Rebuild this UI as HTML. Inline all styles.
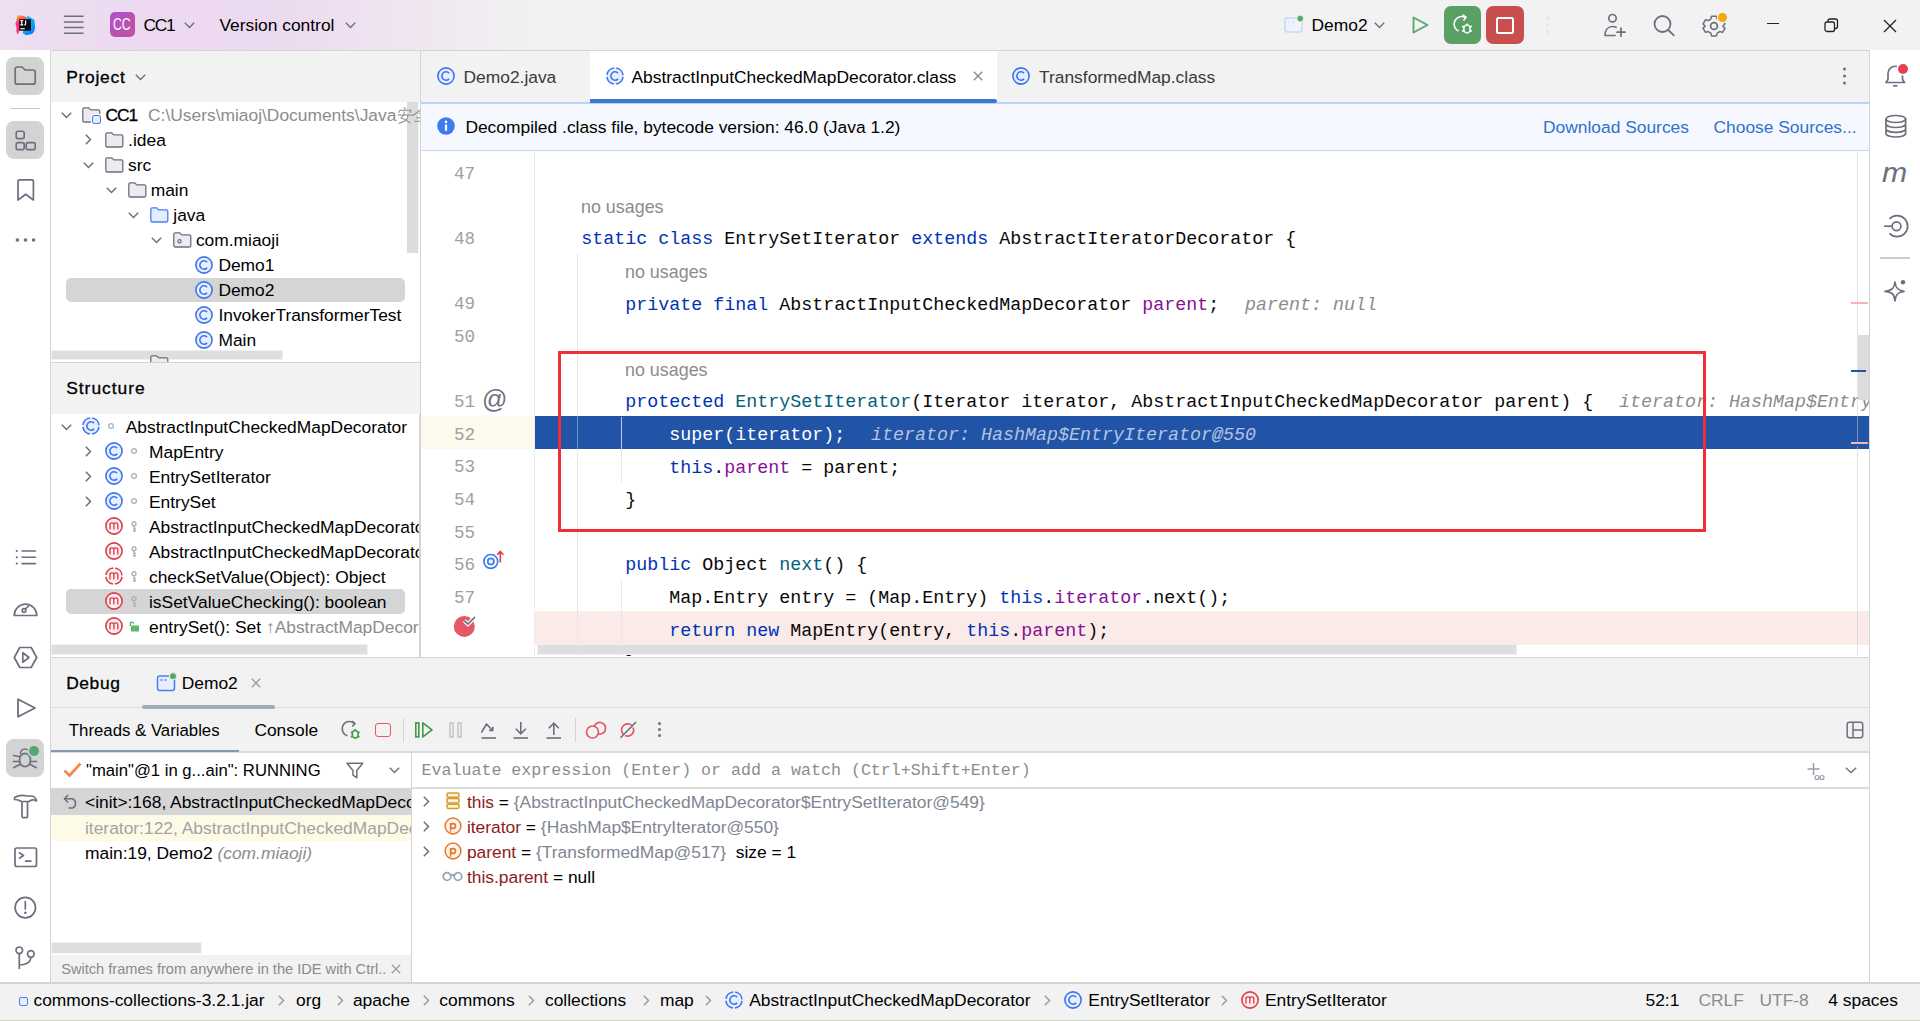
<!DOCTYPE html>
<html><head><meta charset="utf-8">
<style>
*{margin:0;padding:0;box-sizing:border-box}
html,body{width:1920px;height:1021px;overflow:hidden;background:#fff}
body{position:relative;font-family:"Liberation Sans",sans-serif;font-size:17.4px;color:#000}
.a{position:absolute}
.t{position:absolute;white-space:nowrap;line-height:24px;height:24px}
.m{font-family:"Liberation Mono",monospace}
svg{position:absolute;overflow:visible}
/* panels */
#title{left:0;top:0;width:1920px;height:51px;background:linear-gradient(90deg,#efdff1 0px,#ecd9f0 150px,#eddbf0 300px,#f0e9f1 440px,#f2f2f2 540px);border-bottom:1px solid #d6d6d6}
#lstrip{left:0;top:50px;width:51px;height:933px;background:#fff;border-right:1px solid #d4d4d4}
#rstrip{left:1869px;top:50px;width:51px;height:933px;background:#fff;border-left:1px solid #d4d4d4}
#projhdr{left:51px;top:51px;width:369px;height:51px;background:#f2f2f2}
#projtree{left:51px;top:102px;width:369px;height:259px;background:#fff}
#structhdr{left:51px;top:362px;width:369px;height:52px;background:#f2f2f2;border-top:1px solid #d4d4d4}
#structtree{left:51px;top:414px;width:369px;height:243px;background:#fff}
#vsep1{left:420px;top:51px;width:1px;height:606px;background:#d4d4d4}
#tabs{left:421px;top:51px;width:1448px;height:51px;background:#f2f2f2}
#notif{left:421px;top:102px;width:1448px;height:49px;background:#f5f8fe;border-top:1px solid #c5d6f5;border-bottom:1px solid #c5d6f5}
#editor{left:421px;top:151px;width:1448px;height:506px;background:#fff}
#debug{left:51px;top:657px;width:1818px;height:326px;background:#f2f2f2;border-top:1px solid #d4d4d4}
#status{left:0;top:983px;width:1920px;height:38px;background:#f2f2f2;border-top:1px solid #d4d4d4}
</style></head><body>
<div id="title" class="a"></div>
<div id="lstrip" class="a"></div>
<div id="rstrip" class="a"></div>
<div id="projhdr" class="a"></div>
<div id="projtree" class="a"></div>
<div id="structhdr" class="a"></div>
<div id="structtree" class="a"></div>
<div id="vsep1" class="a"></div>
<div id="tabs" class="a"></div>
<div id="notif" class="a"></div>
<div id="editor" class="a"></div>
<div id="debug" class="a"></div>
<div id="status" class="a"></div>
<!--TITLE--><!-- TITLE BAR -->
<svg style="left:15px;top:15px" width="20" height="20" viewBox="0 0 20 20">
 <defs><linearGradient id="lgw" x1="0" y1="0" x2="0.3" y2="1"><stop offset="0" stop-color="#ffb300"/><stop offset="0.45" stop-color="#ff2d8a"/><stop offset="1" stop-color="#ff3358"/></linearGradient>
 <linearGradient id="lgb" x1="0.2" y1="0" x2="0.8" y2="1"><stop offset="0" stop-color="#00d5ff"/><stop offset="1" stop-color="#0a7bff"/></linearGradient></defs>
 <path d="M2.5 0.5L7 0.5L12 2.5L9 8L5 14L3 19.5L1.5 17L1.5 12L0.3 8.5L1.2 6.5Z" fill="url(#lgw)"/>
 <path d="M12.5 0.5L19.5 5L20 13L19 17L17 19L11 20.3L7.5 18L10 12Z" fill="url(#lgb)"/>
 <rect x="4.2" y="4.2" width="11.8" height="11.5" fill="#0c0a0c"/>
 <path d="M5.3 5.6H8.2M6.75 5.6V9.8M5.3 9.8H8.2M10.6 5.6V8.9Q10.6 9.9 9.3 9.9" stroke="#fff" stroke-width="1.2" fill="none"/>
 <rect x="5.3" y="13.2" width="4.5" height="1.1" fill="#fff"/>
</svg>
<svg style="left:64px;top:15px" width="20" height="20" viewBox="0 0 20 20">
 <g stroke="#6c707e" stroke-width="1.6" stroke-linecap="round"><path d="M0.5 1.3H19"/><path d="M0.5 7H19"/><path d="M0.5 12.5H19"/><path d="M0.5 18.2H19"/></g>
</svg>
<div class="a" style="left:110px;top:12px;width:25px;height:25px;border-radius:5px;background:linear-gradient(135deg,#ad52cf 0%,#c4509f 100%)"></div>
<div class="t" style="left:113px;top:12.6px;font-size:17px;color:#fff;transform:scaleX(0.72);transform-origin:0 50%">CC</div>
<div class="t" style="left:143.5px;top:12.6px;letter-spacing:-1.3px">CC1</div>
<svg style="left:183.5px;top:21.5px" width="11" height="7" viewBox="0 0 11 7"><path d="M0.8 0.8L5.5 5.5L10.2 0.8" fill="none" stroke="#6c707e" stroke-width="1.4"/></svg>
<div class="t" style="left:219.4px;top:12.6px">Version control</div>
<svg style="left:345px;top:21.5px" width="11" height="7" viewBox="0 0 11 7"><path d="M0.8 0.8L5.5 5.5L10.2 0.8" fill="none" stroke="#6c707e" stroke-width="1.4"/></svg>

<svg style="left:1284px;top:17px" width="20" height="16" viewBox="0 0 20 16">
 <rect x="1" y="1" width="17" height="14" rx="2" fill="#eef2fc" stroke="#c7d7f7" stroke-width="1.4"/>
 <path d="M4 5H6M8 5H10" stroke="#c7d7f7" stroke-width="1.2"/>
 <circle cx="16.2" cy="1.6" r="3.3" fill="#55a76a" stroke="#f2f2f2" stroke-width="0.8"/>
</svg>
<div class="t" style="left:1311.5px;top:13px">Demo2</div>
<svg style="left:1373.5px;top:22px" width="11" height="7" viewBox="0 0 11 7"><path d="M0.8 0.8L5.5 5.5L10.2 0.8" fill="none" stroke="#6c707e" stroke-width="1.4"/></svg>
<svg style="left:1412px;top:16px" width="17" height="18" viewBox="0 0 17 18"><path d="M1.5 1.5L15.5 9L1.5 16.5Z" fill="none" stroke="#55a76a" stroke-width="1.8" stroke-linejoin="round"/></svg>
<div class="a" style="left:1444px;top:6px;width:37px;height:38px;border-radius:7px;background:#5a9f63"></div>
<svg style="left:1451px;top:14px" width="24" height="22" viewBox="0 0 24 22">
 <path d="M14 3.2A7.5 7.5 0 1 0 7.5 17" fill="none" stroke="#fff" stroke-width="1.6"/>
 <path d="M11.5 1L15 3.2L12.5 6.5" fill="none" stroke="#fff" stroke-width="1.6"/>
 <ellipse cx="16" cy="15" rx="3.2" ry="4" fill="none" stroke="#fff" stroke-width="1.6"/>
 <path d="M11 12.5H13M19 12.5H21M11 17H13M19 17H21M16 9.5V11" stroke="#fff" stroke-width="1.4"/>
</svg>
<div class="a" style="left:1486px;top:6px;width:38px;height:38px;border-radius:7px;background:#c94f4f"></div>
<div class="a" style="left:1496px;top:16.5px;width:17.5px;height:17px;border:2.3px solid #fff;border-radius:2.5px"></div>
<svg style="left:1545px;top:16px" width="5" height="18" viewBox="0 0 5 18"><g fill="#e3e3e3"><circle cx="2.5" cy="2" r="1.5"/><circle cx="2.5" cy="9" r="1.5"/><circle cx="2.5" cy="15.7" r="1.5"/></g></svg>

<svg style="left:1603px;top:13px" width="24" height="24" viewBox="0 0 24 24">
 <g fill="none" stroke="#6c707e" stroke-width="1.7" stroke-linecap="round">
 <circle cx="9.5" cy="5.2" r="3.7"/>
 <path d="M2 22.5C2 17 5 13.5 9.5 13.5C11 13.5 12 13.8 13 14.3M2 22.5H12"/>
 <path d="M18 15V23.3M14 19.2H22"/>
 </g>
</svg>
<svg style="left:1652px;top:14px" width="24" height="24" viewBox="0 0 24 24">
 <g fill="none" stroke="#6c707e" stroke-width="1.8" stroke-linecap="round"><circle cx="10.5" cy="10" r="8"/><path d="M16.3 16L21.8 21.3"/></g>
</svg>
<svg style="left:1701px;top:13px" width="26" height="26" viewBox="0 0 26 26">
 <g fill="none" stroke="#6c707e" stroke-width="1.7" stroke-linejoin="round">
 <path d="M10.3 2.2H15.7L16.5 5.3L19.4 7L22.5 6.1L25.2 10.8L22.9 13L22.9 13.2L25.2 15.4L22.5 20.1L19.4 19.2L16.5 20.9L15.7 24H10.3L9.5 20.9L6.6 19.2L3.5 20.1L0.8 15.4L3.1 13.2L3.1 13L0.8 10.8L3.5 6.1L6.6 7L9.5 5.3Z" transform="translate(13 13) scale(0.9) translate(-13 -13)"/>
 <circle cx="13" cy="13" r="3.4"/>
 </g>
</svg>
<div class="a" style="left:1717.5px;top:12.5px;width:9px;height:9px;border-radius:50%;background:#f5a80c;box-shadow:0 0 0 1.2px #f2f2f2"></div>
<div class="a" style="left:1767px;top:23px;width:12px;height:1.3px;background:#222"></div>
<svg style="left:1824px;top:18px" width="15" height="15" viewBox="0 0 15 15"><g fill="none" stroke="#222" stroke-width="1.3"><rect x="1" y="4" width="9.5" height="9.5" rx="2"/><path d="M4 3.8V3A2 2 0 0 1 6 1H11.5A2 2 0 0 1 13.5 3V8.5A2 2 0 0 1 11.5 10.5H10.6"/></g></svg>
<svg style="left:1883px;top:18.5px" width="14" height="14" viewBox="0 0 14 14"><path d="M1 1L13 13M13 1L1 13" stroke="#222" stroke-width="1.3"/></svg>
<!--/TITLE-->
<!--STRIPS--><!-- LEFT STRIP -->
<div class="a" style="left:6px;top:57px;width:38px;height:38px;border-radius:8px;background:#d3d3d3"></div>
<svg style="left:14px;top:66px" width="23" height="20" viewBox="0 0 23 20"><path d="M1.2 3A2 2 0 0 1 3.2 1H8.2L11 4H19.2A2 2 0 0 1 21.2 6V16.2A2 2 0 0 1 19.2 18.2H3.2A2 2 0 0 1 1.2 16.2Z" fill="none" stroke="#6c707e" stroke-width="1.7" stroke-linejoin="round"/></svg>
<div class="a" style="left:10px;top:107.5px;width:30px;height:1.5px;background:#c9ccd6"></div>
<div class="a" style="left:6px;top:121px;width:38px;height:38px;border-radius:8px;background:#d3d3d3"></div>
<svg style="left:15px;top:130px" width="22" height="21" viewBox="0 0 22 21"><g fill="none" stroke="#6c707e" stroke-width="1.6"><rect x="1.2" y="1.3" width="8" height="7.3" rx="1.8"/><rect x="1.2" y="12.6" width="8" height="7" rx="1.8"/><rect x="11.2" y="12.6" width="9" height="7" rx="1.8"/></g></svg>
<svg style="left:17px;top:179px" width="18" height="23" viewBox="0 0 18 23"><path d="M1 2A1.2 1.2 0 0 1 2.2 0.9H15.2A1.2 1.2 0 0 1 16.4 2V21L8.7 15.3L1 21Z" fill="none" stroke="#6c707e" stroke-width="1.7" stroke-linejoin="round"/></svg>
<svg style="left:15px;top:237px" width="21" height="6" viewBox="0 0 21 6"><g fill="#6c707e"><circle cx="2.4" cy="3" r="1.8"/><circle cx="10.5" cy="3" r="1.8"/><circle cx="18.6" cy="3" r="1.8"/></g></svg>

<svg style="left:15px;top:549px" width="22" height="17" viewBox="0 0 22 17"><g stroke="#6c707e" stroke-width="1.6" stroke-linecap="round"><path d="M7 2H20.5M7 8.3H20.5M7 14.6H20.5"/></g><g fill="#6c707e"><circle cx="1.8" cy="2" r="1.1"/><circle cx="1.8" cy="8.3" r="1.1"/><circle cx="1.8" cy="14.6" r="1.1"/></g></svg>
<svg style="left:13px;top:597px" width="25" height="20" viewBox="0 0 25 20"><g fill="none" stroke="#6c707e" stroke-width="1.7" stroke-linejoin="round"><path d="M1.2 18.5A11.3 11.3 0 0 1 23.8 18.5Z"/><circle cx="11" cy="13.5" r="1.8"/><path d="M12.3 12.2L16 8.5"/></g></svg>
<svg style="left:13px;top:646px" width="25" height="23" viewBox="0 0 25 23"><g fill="none" stroke="#6c707e" stroke-width="1.7" stroke-linejoin="round"><path d="M6.8 1.5H18.2L23.7 11.5L18.2 21.5H6.8L1.3 11.5Z"/><path d="M9.8 6.8L16 11.5L9.8 16.2Z"/></g></svg>
<svg style="left:16px;top:697px" width="21" height="22" viewBox="0 0 21 22"><path d="M2 2.2L19 11L2 19.8Z" fill="none" stroke="#6c707e" stroke-width="1.8" stroke-linejoin="round"/></svg>
<div class="a" style="left:6px;top:739px;width:38px;height:38px;border-radius:8px;background:#d3d3d3"></div>
<svg style="left:12px;top:745px" width="28" height="26" viewBox="0 0 28 26"><g fill="none" stroke="#6c707e" stroke-width="1.7" stroke-linecap="round"><path d="M8.5 8.5A4.5 4.5 0 0 1 17.5 8.5"/><ellipse cx="13" cy="15" rx="5.5" ry="6.7"/><path d="M1.5 10.5L7.5 11.5M1.5 16.5H7.5M2 22.5L7.8 19.5M24.5 10.5L18.5 11.5M24.5 16.5H18.5M24 22.5L18.2 19.5"/></g></svg>
<div class="a" style="left:29px;top:746px;width:9.5px;height:9.5px;border-radius:50%;background:#55a76a;box-shadow:0 0 0 1.5px #d3d3d3"></div>
<svg style="left:13px;top:794px" width="25" height="26" viewBox="0 0 25 26"><g fill="none" stroke="#6c707e" stroke-width="1.7" stroke-linejoin="round"><path d="M1.5 3.5C5 1.5 10 1 14 2H17.5C20.5 2 23 4 23.5 7L21.5 6C19.5 5.5 18 6 17 7L16.2 7.5H8.5C6 6 3.8 5.5 1.5 5.5Z"/><path d="M9 8V22.5A1.2 1.2 0 0 0 10.2 23.7H13.3A1.2 1.2 0 0 0 14.5 22.5V8"/></g></svg>
<svg style="left:14px;top:847px" width="24" height="21" viewBox="0 0 24 21"><g fill="none" stroke="#6c707e" stroke-width="1.7" stroke-linejoin="round"><rect x="1" y="1" width="21.5" height="18.5" rx="2"/><path d="M5 5.5L9.5 8.5L5 11.5M11 14.2H17.5"/></g></svg>
<svg style="left:14px;top:896px" width="24" height="24" viewBox="0 0 24 24"><g fill="none" stroke="#6c707e" stroke-width="1.7"><circle cx="11.3" cy="11.6" r="10.2"/><path d="M11.3 5.5V13" stroke-linecap="round"/></g><circle cx="11.3" cy="16.8" r="1.3" fill="#6c707e"/></svg>
<svg style="left:15px;top:946px" width="21" height="24" viewBox="0 0 21 24"><g fill="none" stroke="#6c707e" stroke-width="1.7"><circle cx="4.3" cy="4.3" r="3.3"/><circle cx="15.8" cy="8" r="3.3"/><path d="M4.3 7.6V23M4.3 19C10 19 15.8 17 15.8 11.3"/></g></svg>

<!-- RIGHT STRIP -->
<svg style="left:1884px;top:64px" width="26" height="25" viewBox="0 0 26 25"><g fill="none" stroke="#6c707e" stroke-width="1.7" stroke-linejoin="round"><path d="M2 18.5H20.5L18.5 15.5V9.5A7.2 7.2 0 0 0 4 9.5V15.5Z"/><path d="M9 21.8H13.5"/></g></svg>
<div class="a" style="left:1898px;top:63.5px;width:10px;height:10px;border-radius:50%;background:#e5404e;box-shadow:0 0 0 1.5px #fff"></div>
<svg style="left:1884px;top:114px" width="24" height="25" viewBox="0 0 24 25"><g fill="none" stroke="#6c707e" stroke-width="1.7"><ellipse cx="11.8" cy="5" rx="9.8" ry="3.5"/><path d="M2 5V19.5C2 21.5 6.5 23 11.8 23S21.6 21.5 21.6 19.5V5M2 10C2 12 6.5 13.5 11.8 13.5S21.6 12 21.6 10M2 15C2 17 6.5 18.3 11.8 18.3S21.6 17 21.6 15"/></g></svg>
<div class="t" style="left:1883px;top:158px;font-family:'Liberation Sans',sans-serif;font-style:italic;font-size:28px;line-height:30px;height:30px;color:#6c707e;transform:scaleX(1.08)">m</div>
<svg style="left:1883px;top:214px" width="26" height="25" viewBox="0 0 26 25"><g fill="none" stroke="#6c707e" stroke-width="1.7"><circle cx="13.5" cy="12.2" r="4.4"/><path d="M6.5 5A10.5 10.5 0 1 1 6.5 19.4"/><path d="M1 12.2H9"/></g></svg>
<div class="a" style="left:1880px;top:257px;width:30px;height:1.5px;background:#c9ccd6"></div>
<svg style="left:1883px;top:279px" width="26" height="24" viewBox="0 0 26 24"><path d="M12 3C12.5 9 15 11.5 21 12.3C15 13 12.5 15.5 12 22C11.5 15.5 9 13 2 12.3C9 11.5 11.5 9 12 3Z" fill="none" stroke="#6c707e" stroke-width="1.7" stroke-linejoin="round"/><circle cx="20" cy="3.3" r="2.2" fill="#6c707e"/></svg>
<!--/STRIPS-->
<!--LEFT--><div class="a" style="left:0;top:0;width:420px;height:657px;overflow:hidden">
<div class="t" style="left:66.2px;top:65px;-webkit-text-stroke:0.3px #000;font-size:17.4px;letter-spacing:0.75px">Project</div>
<svg style="left:135px;top:74px" width="11" height="7" viewBox="0 0 11 7"><path d="M0.8 0.8L5.5 5.5L10.2 0.8" fill="none" stroke="#6c707e" stroke-width="1.4"/></svg>
<div class="a" style="left:66px;top:277.5px;width:339px;height:24.5px;border-radius:5px;background:#d5d5d5"></div>
<div class="a" style="left:407px;top:102px;width:11.5px;height:151px;background:#dcdcdc;border-right:1px solid #f4f4f4"></div>
<svg style="left:60.5px;top:111.5px" width="11" height="7" viewBox="0 0 11 7"><path d="M0.8 0.8L5.5 5.5L10.2 0.8" fill="none" stroke="#6c707e" stroke-width="1.5"/></svg>
<svg style="left:82.3px;top:107.0px" width="19" height="16" viewBox="0 0 19 16"><path d="M0.8 2.2A1.4 1.4 0 0 1 2.2 0.8H6.6L8.8 2.9H16.4A1.4 1.4 0 0 1 17.8 4.3V13.6A1.4 1.4 0 0 1 16.4 15H2.2A1.4 1.4 0 0 1 0.8 13.6Z" fill="#ebecf0" stroke="#6c707e" stroke-width="1.3" stroke-linejoin="round"/></svg>
<div class="a" style="left:91.8px;top:115.0px;width:9px;height:9px;border:1.4px solid #4a7ff0;border-radius:2px;background:#e3ecfd;box-shadow:0 0 0 1.2px #fff"></div>
<div class="t" style="left:105.5px;top:103.0px;"><span style="-webkit-text-stroke:0.3px #000;letter-spacing:-1.1px">CC1</span></div>
<svg style="left:85.4px;top:134.0px" width="7" height="11" viewBox="0 0 7 11"><path d="M0.8 0.8L5.5 5.5L0.8 10.2" fill="none" stroke="#6c707e" stroke-width="1.5"/></svg>
<svg style="left:104.9px;top:132.0px" width="19" height="16" viewBox="0 0 19 16"><path d="M0.8 2.2A1.4 1.4 0 0 1 2.2 0.8H6.6L8.8 2.9H16.4A1.4 1.4 0 0 1 17.8 4.3V13.6A1.4 1.4 0 0 1 16.4 15H2.2A1.4 1.4 0 0 1 0.8 13.6Z" fill="#ebecf0" stroke="#6c707e" stroke-width="1.3" stroke-linejoin="round"/></svg>
<div class="t" style="left:128.1px;top:128.0px;">.idea</div>
<svg style="left:83.1px;top:161.5px" width="11" height="7" viewBox="0 0 11 7"><path d="M0.8 0.8L5.5 5.5L10.2 0.8" fill="none" stroke="#6c707e" stroke-width="1.5"/></svg>
<svg style="left:104.9px;top:157.0px" width="19" height="16" viewBox="0 0 19 16"><path d="M0.8 2.2A1.4 1.4 0 0 1 2.2 0.8H6.6L8.8 2.9H16.4A1.4 1.4 0 0 1 17.8 4.3V13.6A1.4 1.4 0 0 1 16.4 15H2.2A1.4 1.4 0 0 1 0.8 13.6Z" fill="#ebecf0" stroke="#6c707e" stroke-width="1.3" stroke-linejoin="round"/></svg>
<div class="t" style="left:128.1px;top:153.0px;">src</div>
<svg style="left:105.7px;top:186.5px" width="11" height="7" viewBox="0 0 11 7"><path d="M0.8 0.8L5.5 5.5L10.2 0.8" fill="none" stroke="#6c707e" stroke-width="1.5"/></svg>
<svg style="left:127.5px;top:182.0px" width="19" height="16" viewBox="0 0 19 16"><path d="M0.8 2.2A1.4 1.4 0 0 1 2.2 0.8H6.6L8.8 2.9H16.4A1.4 1.4 0 0 1 17.8 4.3V13.6A1.4 1.4 0 0 1 16.4 15H2.2A1.4 1.4 0 0 1 0.8 13.6Z" fill="#ebecf0" stroke="#6c707e" stroke-width="1.3" stroke-linejoin="round"/></svg>
<div class="t" style="left:150.7px;top:178.0px;">main</div>
<svg style="left:128.3px;top:211.5px" width="11" height="7" viewBox="0 0 11 7"><path d="M0.8 0.8L5.5 5.5L10.2 0.8" fill="none" stroke="#6c707e" stroke-width="1.5"/></svg>
<svg style="left:150.1px;top:207.0px" width="19" height="16" viewBox="0 0 19 16"><path d="M0.8 2.2A1.4 1.4 0 0 1 2.2 0.8H6.6L8.8 2.9H16.4A1.4 1.4 0 0 1 17.8 4.3V13.6A1.4 1.4 0 0 1 16.4 15H2.2A1.4 1.4 0 0 1 0.8 13.6Z" fill="#e3ecfd" stroke="#4a7ff0" stroke-width="1.3" stroke-linejoin="round"/></svg>
<div class="t" style="left:173.3px;top:203.0px;">java</div>
<svg style="left:150.9px;top:236.5px" width="11" height="7" viewBox="0 0 11 7"><path d="M0.8 0.8L5.5 5.5L10.2 0.8" fill="none" stroke="#6c707e" stroke-width="1.5"/></svg>
<svg style="left:172.7px;top:232.0px" width="19" height="16" viewBox="0 0 19 16"><path d="M0.8 2.2A1.4 1.4 0 0 1 2.2 0.8H6.6L8.8 2.9H16.4A1.4 1.4 0 0 1 17.8 4.3V13.6A1.4 1.4 0 0 1 16.4 15H2.2A1.4 1.4 0 0 1 0.8 13.6Z" fill="#ebecf0" stroke="#6c707e" stroke-width="1.3" stroke-linejoin="round"/><circle cx="6.5" cy="9.3" r="1.6" fill="none" stroke="#6c707e" stroke-width="1.2"/></svg>
<div class="t" style="left:195.9px;top:228.0px;">com.miaoji</div>
<div class="t" style="left:148.0px;top:103.0px;"><span style="color:#8c8c8c">C:\Users\miaoj\Documents\Java</span></div>
<svg style="left:398px;top:106.5px" width="24" height="17" viewBox="0 0 24 17"><g fill="none" stroke="#8c8c8c" stroke-width="1.05" stroke-linecap="square"><path d="M6.3 0.8L7.3 2"/><path d="M1 5.3L2 3.3H12.8L12.2 5.3"/><path d="M0.3 8H14.3"/><path d="M6.2 5V8"/><path d="M5.3 8.5L3 11L7.5 12.6L12.2 16"/><path d="M10 8.5L9.3 11.5L7 14L1 16.4"/><path d="M15.5 8.2L21.5 3.5M21 6.2H24M18.5 10.7H24M16.8 14.3H24"/></g></svg>
<svg style="left:193.7px;top:254.7px" width="20" height="20" viewBox="0 0 20 20"><circle cx="10" cy="10" r="8.1" fill="#e7effd" stroke="#3d74f0" stroke-width="1.6"/><path d="M13.1 7.1A4.2 4.2 0 1 0 13.1 12.9" fill="none" stroke="#3d74f0" stroke-width="1.6"/></svg>
<div class="t" style="left:218.4px;top:253.0px;">Demo1</div>
<svg style="left:193.7px;top:279.7px" width="20" height="20" viewBox="0 0 20 20"><circle cx="10" cy="10" r="8.1" fill="#e7effd" stroke="#3d74f0" stroke-width="1.6"/><path d="M13.1 7.1A4.2 4.2 0 1 0 13.1 12.9" fill="none" stroke="#3d74f0" stroke-width="1.6"/></svg>
<div class="t" style="left:218.4px;top:278.0px;">Demo2</div>
<svg style="left:193.7px;top:304.7px" width="20" height="20" viewBox="0 0 20 20"><circle cx="10" cy="10" r="8.1" fill="#e7effd" stroke="#3d74f0" stroke-width="1.6"/><path d="M13.1 7.1A4.2 4.2 0 1 0 13.1 12.9" fill="none" stroke="#3d74f0" stroke-width="1.6"/></svg>
<div class="t" style="left:218.4px;top:303.0px;">InvokerTransformerTest</div>
<svg style="left:193.7px;top:329.7px" width="20" height="20" viewBox="0 0 20 20"><circle cx="10" cy="10" r="8.1" fill="#e7effd" stroke="#3d74f0" stroke-width="1.6"/><path d="M13.1 7.1A4.2 4.2 0 1 0 13.1 12.9" fill="none" stroke="#3d74f0" stroke-width="1.6"/></svg>
<div class="t" style="left:218.4px;top:328.0px;">Main</div>
<div class="a" style="left:51px;top:349.5px;width:232px;height:10px;background:#dedede;border:1px solid #f0f0f0"></div>
<svg style="left:150px;top:355px" width="19" height="7" viewBox="0 0 19 7"><path d="M0.8 7V2.2A1.4 1.4 0 0 1 2.2 0.8H6.6L8.8 2.9H16.4A1.4 1.4 0 0 1 17.8 4.3V7" fill="#ebecf0" stroke="#6c707e" stroke-width="1.3"/></svg>
<div class="t" style="left:66.2px;top:376px;-webkit-text-stroke:0.3px #000;font-size:17.4px;letter-spacing:1px">Structure</div>
<div class="a" style="left:66px;top:589px;width:339px;height:24.5px;border-radius:5px;background:#d5d5d5"></div>
<svg style="left:60.8px;top:423.5px" width="11" height="7" viewBox="0 0 11 7"><path d="M0.8 0.8L5.5 5.5L10.2 0.8" fill="none" stroke="#6c707e" stroke-width="1.5"/></svg>
<svg style="left:80.7px;top:416.0px" width="20" height="20" viewBox="0 0 20 20"><circle cx="10" cy="10" r="8.1" fill="#e7effd" stroke="#3d74f0" stroke-width="1.6" stroke-dasharray="10.72 2" stroke-dashoffset="11.72"/><path d="M13.1 7.1A4.2 4.2 0 1 0 13.1 12.9" fill="none" stroke="#3d74f0" stroke-width="1.6"/></svg>
<svg style="left:106.9px;top:422.0px" width="8" height="8" viewBox="0 0 8 8"><circle cx="4" cy="4" r="2.4" fill="none" stroke="#a8b2bd" stroke-width="1.3"/></svg>
<div class="t" style="left:125.7px;top:415.0px;">AbstractInputCheckedMapDecorator</div>
<svg style="left:85.0px;top:446.0px" width="7" height="11" viewBox="0 0 7 11"><path d="M0.8 0.8L5.5 5.5L0.8 10.2" fill="none" stroke="#6c707e" stroke-width="1.5"/></svg>
<svg style="left:103.9px;top:441.0px" width="20" height="20" viewBox="0 0 20 20"><circle cx="10" cy="10" r="8.1" fill="#e7effd" stroke="#3d74f0" stroke-width="1.6"/><path d="M13.1 7.1A4.2 4.2 0 1 0 13.1 12.9" fill="none" stroke="#3d74f0" stroke-width="1.6"/></svg>
<svg style="left:130.0px;top:447.0px" width="8" height="8" viewBox="0 0 8 8"><circle cx="4" cy="4" r="2.4" fill="none" stroke="#a8b2bd" stroke-width="1.3"/></svg>
<div class="t" style="left:149.0px;top:440.0px;">MapEntry</div>
<svg style="left:85.0px;top:471.0px" width="7" height="11" viewBox="0 0 7 11"><path d="M0.8 0.8L5.5 5.5L0.8 10.2" fill="none" stroke="#6c707e" stroke-width="1.5"/></svg>
<svg style="left:103.9px;top:466.0px" width="20" height="20" viewBox="0 0 20 20"><circle cx="10" cy="10" r="8.1" fill="#e7effd" stroke="#3d74f0" stroke-width="1.6"/><path d="M13.1 7.1A4.2 4.2 0 1 0 13.1 12.9" fill="none" stroke="#3d74f0" stroke-width="1.6"/></svg>
<svg style="left:130.0px;top:472.0px" width="8" height="8" viewBox="0 0 8 8"><circle cx="4" cy="4" r="2.4" fill="none" stroke="#a8b2bd" stroke-width="1.3"/></svg>
<div class="t" style="left:149.0px;top:465.0px;">EntrySetIterator</div>
<svg style="left:85.0px;top:496.0px" width="7" height="11" viewBox="0 0 7 11"><path d="M0.8 0.8L5.5 5.5L0.8 10.2" fill="none" stroke="#6c707e" stroke-width="1.5"/></svg>
<svg style="left:103.9px;top:491.0px" width="20" height="20" viewBox="0 0 20 20"><circle cx="10" cy="10" r="8.1" fill="#e7effd" stroke="#3d74f0" stroke-width="1.6"/><path d="M13.1 7.1A4.2 4.2 0 1 0 13.1 12.9" fill="none" stroke="#3d74f0" stroke-width="1.6"/></svg>
<svg style="left:130.0px;top:497.0px" width="8" height="8" viewBox="0 0 8 8"><circle cx="4" cy="4" r="2.4" fill="none" stroke="#a8b2bd" stroke-width="1.3"/></svg>
<div class="t" style="left:149.0px;top:490.0px;">EntrySet</div>
<svg style="left:103.9px;top:516.0px" width="20" height="20" viewBox="0 0 20 20"><circle cx="10" cy="10" r="8.1" fill="#fdf0f0" stroke="#db3b4b" stroke-width="1.6"/><path d="M6 13.6V6.9M6 8.6C6.2 7.3 7 6.8 7.8 6.8S9.9 7.3 9.9 8.6V13.6M9.9 8.6C10 7.3 10.8 6.8 11.7 6.8S13.8 7.3 13.8 8.6V13.6" fill="none" stroke="#db3b4b" stroke-width="1.35"/></svg>
<svg style="left:130.2px;top:521.0px" width="8" height="12" viewBox="0 0 8 12"><circle cx="4" cy="2.8" r="2" fill="none" stroke="#a8b2bd" stroke-width="1.4"/><path d="M4 4.8V11M4 7.5H6M4 9.8H6" fill="none" stroke="#a8b2bd" stroke-width="1.4"/></svg>
<div class="t" style="left:149.0px;top:515.0px;">AbstractInputCheckedMapDecorator</div>
<svg style="left:103.9px;top:541.0px" width="20" height="20" viewBox="0 0 20 20"><circle cx="10" cy="10" r="8.1" fill="#fdf0f0" stroke="#db3b4b" stroke-width="1.6"/><path d="M6 13.6V6.9M6 8.6C6.2 7.3 7 6.8 7.8 6.8S9.9 7.3 9.9 8.6V13.6M9.9 8.6C10 7.3 10.8 6.8 11.7 6.8S13.8 7.3 13.8 8.6V13.6" fill="none" stroke="#db3b4b" stroke-width="1.35"/></svg>
<svg style="left:130.2px;top:546.0px" width="8" height="12" viewBox="0 0 8 12"><circle cx="4" cy="2.8" r="2" fill="none" stroke="#a8b2bd" stroke-width="1.4"/><path d="M4 4.8V11M4 7.5H6M4 9.8H6" fill="none" stroke="#a8b2bd" stroke-width="1.4"/></svg>
<div class="t" style="left:149.0px;top:540.0px;">AbstractInputCheckedMapDecorator</div>
<svg style="left:103.9px;top:566.0px" width="20" height="20" viewBox="0 0 20 20"><circle cx="10" cy="10" r="8.1" fill="#fdf0f0" stroke="#db3b4b" stroke-width="1.6" stroke-dasharray="10.72 2" stroke-dashoffset="11.72"/><path d="M6 13.6V6.9M6 8.6C6.2 7.3 7 6.8 7.8 6.8S9.9 7.3 9.9 8.6V13.6M9.9 8.6C10 7.3 10.8 6.8 11.7 6.8S13.8 7.3 13.8 8.6V13.6" fill="none" stroke="#db3b4b" stroke-width="1.35"/></svg>
<svg style="left:130.2px;top:571.0px" width="8" height="12" viewBox="0 0 8 12"><circle cx="4" cy="2.8" r="2" fill="none" stroke="#a8b2bd" stroke-width="1.4"/><path d="M4 4.8V11M4 7.5H6M4 9.8H6" fill="none" stroke="#a8b2bd" stroke-width="1.4"/></svg>
<div class="t" style="left:149.0px;top:565.0px;">checkSetValue(Object): Object</div>
<svg style="left:103.9px;top:591.0px" width="20" height="20" viewBox="0 0 20 20"><circle cx="10" cy="10" r="8.1" fill="#fdf0f0" stroke="#db3b4b" stroke-width="1.6"/><path d="M6 13.6V6.9M6 8.6C6.2 7.3 7 6.8 7.8 6.8S9.9 7.3 9.9 8.6V13.6M9.9 8.6C10 7.3 10.8 6.8 11.7 6.8S13.8 7.3 13.8 8.6V13.6" fill="none" stroke="#db3b4b" stroke-width="1.35"/></svg>
<svg style="left:130.2px;top:596.0px" width="8" height="12" viewBox="0 0 8 12"><circle cx="4" cy="2.8" r="2" fill="none" stroke="#a8b2bd" stroke-width="1.4"/><path d="M4 4.8V11M4 7.5H6M4 9.8H6" fill="none" stroke="#a8b2bd" stroke-width="1.4"/></svg>
<div class="t" style="left:149.0px;top:590.0px;">isSetValueChecking(): boolean</div>
<svg style="left:103.9px;top:616.0px" width="20" height="20" viewBox="0 0 20 20"><circle cx="10" cy="10" r="8.1" fill="#fdf0f0" stroke="#db3b4b" stroke-width="1.6"/><path d="M6 13.6V6.9M6 8.6C6.2 7.3 7 6.8 7.8 6.8S9.9 7.3 9.9 8.6V13.6M9.9 8.6C10 7.3 10.8 6.8 11.7 6.8S13.8 7.3 13.8 8.6V13.6" fill="none" stroke="#db3b4b" stroke-width="1.35"/></svg>
<svg style="left:129.0px;top:620.5px" width="10" height="11" viewBox="0 0 10 11"><path d="M1.3 5V2.8A1.8 1.8 0 0 1 4.8 2.5" fill="none" stroke="#5fb865" stroke-width="1.4"/><rect x="2" y="4.5" width="8" height="6" fill="#5fb865"/></svg>
<div class="t" style="left:149.0px;top:615.0px;">entrySet(): Set <span style="color:#8c8c8c">↑AbstractMapDecorator</span></div>
<div class="a" style="left:419px;top:414px;width:1px;height:243px;background:#d4d4d4"></div>
<div class="a" style="left:51px;top:644px;width:317px;height:11px;background:#dedede;border:1px solid #f0f0f0"></div>
</div><!--/LEFT-->
<!--EDITOR--><div class="a" style="left:421.0px;top:50.0px;width:1448.0px;height:1.0px;background:#d4d4d4;"></div>
<div class="a" style="left:590.0px;top:51.0px;width:407.0px;height:51.0px;background:#fff;"></div>
<div class="a" style="left:421.0px;top:102.0px;width:1448.0px;height:1.5px;background:#bcd1f7;"></div>
<div class="a" style="left:590.0px;top:99.0px;width:407.0px;height:3.5px;background:#3a77d1;border-radius:0 2px 2px 0"></div>
<svg style="left:435.9px;top:65.9px" width="20" height="20" viewBox="0 0 20 20"><circle cx="10" cy="10" r="8.1" fill="#e7effd" stroke="#3d74f0" stroke-width="1.6"/><path d="M13.1 7.1A4.2 4.2 0 1 0 13.1 12.9" fill="none" stroke="#3d74f0" stroke-width="1.6"/></svg>
<div class="t" style="left:463.5px;top:65.1px;color:#3a3a3a">Demo2.java</div>
<svg style="left:605.3px;top:65.9px" width="20" height="20" viewBox="0 0 20 20"><circle cx="10" cy="10" r="8.1" fill="#e7effd" stroke="#3d74f0" stroke-width="1.6" stroke-dasharray="10.72 2" stroke-dashoffset="11.72"/><path d="M13.1 7.1A4.2 4.2 0 1 0 13.1 12.9" fill="none" stroke="#3d74f0" stroke-width="1.6"/></svg>
<div class="t" style="left:631.5px;top:65.1px;">AbstractInputCheckedMapDecorator.class</div>
<svg style="left:973px;top:71px" width="10" height="10" viewBox="0 0 10 10"><path d="M0.8 0.8L9.2 9.2M9.2 0.8L0.8 9.2" stroke="#818594" stroke-width="1.3"/></svg>
<svg style="left:1010.8px;top:65.9px" width="20" height="20" viewBox="0 0 20 20"><circle cx="10" cy="10" r="8.1" fill="#e7effd" stroke="#3d74f0" stroke-width="1.6"/><path d="M13.1 7.1A4.2 4.2 0 1 0 13.1 12.9" fill="none" stroke="#3d74f0" stroke-width="1.6"/></svg>
<div class="t" style="left:1039.0px;top:65.1px;color:#3a3a3a">TransformedMap.class</div>
<svg style="left:1842px;top:67px" width="5" height="18" viewBox="0 0 5 18"><g fill="#6c707e"><circle cx="2.5" cy="2" r="1.5"/><circle cx="2.5" cy="9" r="1.5"/><circle cx="2.5" cy="16" r="1.5"/></g></svg>
<svg style="left:437px;top:117px" width="18" height="18" viewBox="0 0 18 18"><circle cx="9" cy="9" r="8.8" fill="#3d7ced"/><rect x="7.9" y="7.5" width="2.2" height="6.3" fill="#fff"/><circle cx="9" cy="4.9" r="1.35" fill="#fff"/></svg>
<div class="t" style="left:465.4px;top:114.8px;">Decompiled .class file, bytecode version: 46.0 (Java 1.2)</div>
<div class="t" style="left:1543.0px;top:114.8px;color:#3171cc">Download Sources</div>
<div class="t" style="left:1713.5px;top:114.8px;color:#3171cc">Choose Sources...</div>
<div class="a" style="left:0;top:0;width:1869px;height:657px;clip-path:inset(151px 0 1px 421px)">
<div class="a" style="left:421.0px;top:415.8px;width:114.0px;height:33.5px;background:#fcfaed;"></div>
<div class="a" style="left:534.0px;top:151.0px;width:1.0px;height:506.0px;background:#ebebeb;"></div>
<div class="a" style="left:535.0px;top:611.4px;width:1334.0px;height:33.5px;background:#faeae8;"></div>
<div class="a" style="left:535.0px;top:415.8px;width:1334.0px;height:33.5px;background:#2154a6;"></div>
<div class="a" style="left:576.5px;top:253.8px;width:1.0px;height:500.0px;background:#e6e6e6;"></div>
<div class="a" style="left:576.5px;top:415.8px;width:1.0px;height:33.5px;background:#6f8fc6;"></div>
<div class="a" style="left:620.5px;top:417.8px;width:1.0px;height:64.1px;background:#e6e6e6;"></div>
<div class="a" style="left:620.5px;top:417.3px;width:1.3px;height:32.0px;background:#b9c9e6;"></div>
<div class="a" style="left:620.5px;top:580.8px;width:1.0px;height:100.0px;background:#e6e6e6;"></div>
<div class="t m" style="left:429px;width:46px;text-align:right;top:157.9px;line-height:32.6px;height:32.6px;font-size:17.6px;color:#a0a0a0">47</div>
<div class="t m" style="left:429px;width:46px;text-align:right;top:223.1px;line-height:32.6px;height:32.6px;font-size:17.6px;color:#a0a0a0">48</div>
<div class="t m" style="left:429px;width:46px;text-align:right;top:288.3px;line-height:32.6px;height:32.6px;font-size:17.6px;color:#a0a0a0">49</div>
<div class="t m" style="left:429px;width:46px;text-align:right;top:320.9px;line-height:32.6px;height:32.6px;font-size:17.6px;color:#a0a0a0">50</div>
<div class="t m" style="left:429px;width:46px;text-align:right;top:386.1px;line-height:32.6px;height:32.6px;font-size:17.6px;color:#a0a0a0">51</div>
<div class="t m" style="left:429px;width:46px;text-align:right;top:418.7px;line-height:32.6px;height:32.6px;font-size:17.6px;color:#a0a0a0">52</div>
<div class="t m" style="left:429px;width:46px;text-align:right;top:451.3px;line-height:32.6px;height:32.6px;font-size:17.6px;color:#a0a0a0">53</div>
<div class="t m" style="left:429px;width:46px;text-align:right;top:483.9px;line-height:32.6px;height:32.6px;font-size:17.6px;color:#a0a0a0">54</div>
<div class="t m" style="left:429px;width:46px;text-align:right;top:516.5px;line-height:32.6px;height:32.6px;font-size:17.6px;color:#a0a0a0">55</div>
<div class="t m" style="left:429px;width:46px;text-align:right;top:549.1px;line-height:32.6px;height:32.6px;font-size:17.6px;color:#a0a0a0">56</div>
<div class="t m" style="left:429px;width:46px;text-align:right;top:581.7px;line-height:32.6px;height:32.6px;font-size:17.6px;color:#a0a0a0">57</div>
<div class="t m" style="left:429px;width:46px;text-align:right;top:646.9px;line-height:32.6px;height:32.6px;font-size:17.6px;color:#a0a0a0">59</div>
<div class="t" style="left:581.0px;top:195.0px;color:#8c8c8c;font-size:17.9px">no usages</div>
<div class="t m" style="left:581.3px;top:224.4px;line-height:32.6px;height:32.6px;font-size:18.33px;color:#080808"><span style="color:#0033b3">static</span> <span style="color:#0033b3">class</span> EntrySetIterator <span style="color:#0033b3">extends</span> AbstractIteratorDecorator {</div>
<div class="t" style="left:625.0px;top:260.2px;color:#8c8c8c;font-size:17.9px">no usages</div>
<div class="t m" style="left:625.3px;top:289.6px;line-height:32.6px;height:32.6px;font-size:18.33px;color:#080808"><span style="color:#0033b3">private</span> <span style="color:#0033b3">final</span> AbstractInputCheckedMapDecorator <span style="color:#871094">parent</span>;</div>
<div class="t m" style="left:1245px;top:289.6px;line-height:32.6px;height:32.6px;font-size:18.33px;color:#8c8c8c;font-style:italic">parent: null</div>
<div class="t" style="left:625.0px;top:358.0px;color:#8c8c8c;font-size:17.9px">no usages</div>
<div class="t m" style="left:625.3px;top:387.4px;line-height:32.6px;height:32.6px;font-size:18.33px;color:#080808"><span style="color:#0033b3">protected</span> <span style="color:#00627a">EntrySetIterator</span>(Iterator iterator, AbstractInputCheckedMapDecorator parent) {</div>
<div class="t m" style="left:1619px;top:387.4px;line-height:32.6px;height:32.6px;font-size:18.33px;color:#8c8c8c;font-style:italic">iterator: HashMap$EntryIterator@550</div>
<div class="t m" style="left:669.3px;top:420.0px;line-height:32.6px;height:32.6px;font-size:18.33px;color:#ffffff">super(iterator);</div>
<div class="t m" style="left:871px;top:420.0px;line-height:32.6px;height:32.6px;font-size:18.33px;color:#b3c3e2;font-style:italic">iterator: HashMap$EntryIterator@550</div>
<div class="t m" style="left:669.3px;top:452.6px;line-height:32.6px;height:32.6px;font-size:18.33px;color:#080808"><span style="color:#0033b3">this</span>.<span style="color:#871094">parent</span> = parent;</div>
<div class="t m" style="left:625.3px;top:485.2px;line-height:32.6px;height:32.6px;font-size:18.33px;color:#080808">}</div>
<div class="t m" style="left:625.3px;top:550.4px;line-height:32.6px;height:32.6px;font-size:18.33px;color:#080808"><span style="color:#0033b3">public</span> Object <span style="color:#00627a">next</span>() {</div>
<div class="t m" style="left:669.3px;top:583.0px;line-height:32.6px;height:32.6px;font-size:18.33px;color:#080808">Map.Entry entry = (Map.Entry) <span style="color:#0033b3">this</span>.<span style="color:#871094">iterator</span>.next();</div>
<div class="t m" style="left:669.3px;top:615.6px;line-height:32.6px;height:32.6px;font-size:18.33px;color:#080808"><span style="color:#0033b3">return</span> <span style="color:#0033b3">new</span> MapEntry(entry, <span style="color:#0033b3">this</span>.<span style="color:#871094">parent</span>);</div>
<div class="t m" style="left:625.3px;top:648.2px;line-height:32.6px;height:32.6px;font-size:18.33px;color:#080808">}</div>
<div class="a" style="left:1857.0px;top:151.0px;width:1.0px;height:506.0px;background:rgba(200,200,200,0.5);"></div>
<div class="a" style="left:1857.5px;top:335.0px;width:11.5px;height:65.0px;background:#dcdcdc;"></div>
<div class="a" style="left:1851.0px;top:302.0px;width:17.0px;height:2.0px;background:#f5b5b5;"></div>
<div class="a" style="left:1851.0px;top:370.0px;width:15.0px;height:2.3px;background:#2154a6;"></div>
<div class="a" style="left:1851.0px;top:442.0px;width:17.0px;height:2.0px;background:#f5b5b5;"></div>
<div class="a" style="left:1851.0px;top:444.0px;width:15.0px;height:2.0px;background:#2154a6;"></div>
<div class="a" style="left:537.0px;top:644.0px;width:980.0px;height:11.0px;background:#dedede;border:1px solid #f0f0f0"></div>
</div>
<div class="t" style="left:482px;top:386px;font-size:25px;line-height:26px;height:26px;color:#6c707e">@</div>
<svg style="left:482px;top:549px" width="22" height="22" viewBox="0 0 22 22"><circle cx="8.8" cy="12.4" r="6.9" fill="none" stroke="#3d7ced" stroke-width="1.7"/><circle cx="8.8" cy="12.4" r="3.1" fill="#e7effd" stroke="#3d7ced" stroke-width="1.7"/><path d="M18.3 13.5V2.8M15.2 5.8L18.3 2.5L21.4 5.8" fill="none" stroke="#db3b4b" stroke-width="1.6"/></svg>
<svg style="left:453px;top:615px" width="24" height="23" viewBox="0 0 24 23"><circle cx="11.3" cy="11.4" r="10.5" fill="#e55765"/><path d="M11.2 5.6L14.9 9.1L22 2" fill="none" stroke="#fff" stroke-width="4"/><path d="M11.2 5.6L14.9 9.1L22 2" fill="none" stroke="#6c707e" stroke-width="1.7"/></svg>
<div class="a" style="left:557.8px;top:351px;width:1148.5px;height:180.5px;border:3px solid #ee2f36"></div><!--/EDITOR-->
<!--DEBUG--><div class="t" style="left:66.2px;top:670.6px;-webkit-text-stroke:0.3px #000;letter-spacing:0.6px">Debug</div>
<svg style="left:156px;top:673px" width="22" height="19" viewBox="0 0 22 19"><rect x="1.5" y="3" width="17" height="14.5" rx="2.2" fill="#e7effd" stroke="#4a7ff0" stroke-width="1.5"/><path d="M4.5 7H6.5M8.5 7H10.5" stroke="#4a7ff0" stroke-width="1.3"/><circle cx="17" cy="3.2" r="3.6" fill="#55a76a" stroke="#f2f2f2" stroke-width="1"/></svg>
<div class="t" style="left:181.7px;top:670.6px;">Demo2</div>
<svg style="left:251px;top:678px" width="10" height="10" viewBox="0 0 10 10"><path d="M0.8 0.8L9.2 9.2M9.2 0.8L0.8 9.2" stroke="#9a9da6" stroke-width="1.3"/></svg>
<div class="a" style="left:51.0px;top:707.0px;width:1818.0px;height:1.0px;background:#dcdcdc;"></div>
<div class="a" style="left:141.5px;top:705.0px;width:133.5px;height:3.5px;background:#a0abbe;border-radius:2px"></div>
<div class="t" style="left:68.8px;top:719.3px;font-size:16.8px">Threads &amp; Variables</div>
<div class="t" style="left:254.4px;top:718.3px;">Console</div>
<div class="a" style="left:51.0px;top:751.0px;width:1818.0px;height:1.0px;background:#dcdcdc;"></div>
<div class="a" style="left:51.0px;top:750.0px;width:188.0px;height:2.5px;background:#8797b0;"></div>
<svg style="left:341px;top:720px" width="21" height="21" viewBox="0 0 21 21"><path d="M13.5 3.5A7.3 7.3 0 1 0 6.5 15.8" fill="none" stroke="#6c707e" stroke-width="1.6"/><path d="M11 1L14 3.6L11.2 6.5" fill="none" stroke="#6c707e" stroke-width="1.6"/><ellipse cx="14.2" cy="14.3" rx="3" ry="3.8" fill="none" stroke="#3c9a42" stroke-width="1.6"/><path d="M9.8 12.3H11.3M17.1 12.3H18.6M9.8 16.8H11.3M17.1 16.8H18.6M14.2 9V10.5" stroke="#3c9a42" stroke-width="1.4"/></svg>
<div class="a" style="left:375.4px;top:722.8px;width:15.2px;height:14.7px;background:transparent;border:1.8px solid #e55765;border-radius:3px"></div>
<div class="a" style="left:403.0px;top:718.0px;width:1.0px;height:24.0px;background:#d4d4d4;"></div>
<svg style="left:414px;top:721px" width="20" height="18" viewBox="0 0 20 18"><rect x="1.8" y="1.9" width="3" height="14" fill="none" stroke="#3c9a42" stroke-width="1.6"/><path d="M8.8 1.9L18 8.9L8.8 15.9Z" fill="none" stroke="#3c9a42" stroke-width="1.6" stroke-linejoin="round"/></svg>
<svg style="left:448px;top:721px" width="16" height="18" viewBox="0 0 16 18"><rect x="2" y="1.9" width="3" height="14" fill="none" stroke="#c4c4c4" stroke-width="1.5"/><rect x="10" y="1.9" width="3" height="14" fill="none" stroke="#c4c4c4" stroke-width="1.5"/></svg>
<svg style="left:480px;top:720px" width="18" height="20" viewBox="0 0 18 20"><path d="M1.5 12.5L6.5 4L12.5 10.5M9 10.5H12.8V6.8" fill="none" stroke="#6c707e" stroke-width="1.6" stroke-linejoin="round"/><path d="M1.5 18H16" stroke="#6c707e" stroke-width="1.6"/></svg>
<svg style="left:512px;top:720px" width="18" height="20" viewBox="0 0 18 20"><path d="M8.8 2V13.5M3.8 8.8L8.8 13.8L13.8 8.8" fill="none" stroke="#6c707e" stroke-width="1.6"/><path d="M1.5 18H16" stroke="#6c707e" stroke-width="1.6"/></svg>
<svg style="left:545px;top:720px" width="18" height="20" viewBox="0 0 18 20"><path d="M8.8 15V3.5M3.8 8.2L8.8 3.2L13.8 8.2" fill="none" stroke="#6c707e" stroke-width="1.6"/><path d="M1.5 18H16" stroke="#6c707e" stroke-width="1.6"/></svg>
<div class="a" style="left:574.5px;top:718.0px;width:1.0px;height:24.0px;background:#d4d4d4;"></div>
<svg style="left:585px;top:720px" width="21" height="20" viewBox="0 0 21 20"><circle cx="7.5" cy="12" r="6" fill="none" stroke="#e55765" stroke-width="1.7"/><path d="M9.3 6.5A5.8 5.8 0 1 1 13.2 13.8" fill="none" stroke="#e55765" stroke-width="1.7"/></svg>
<svg style="left:619px;top:720px" width="19" height="20" viewBox="0 0 19 20"><path d="M4.5 14.5A6 6 0 0 1 13 5.5M14 7.5A6 6 0 0 1 6 15.5" fill="none" stroke="#e55765" stroke-width="1.7"/><path d="M1.5 17.8L17 2" stroke="#6c707e" stroke-width="1.6"/></svg>
<svg style="left:657px;top:721px" width="5" height="17" viewBox="0 0 5 17"><g fill="#6c707e"><circle cx="2.5" cy="2.5" r="1.5"/><circle cx="2.5" cy="8.5" r="1.5"/><circle cx="2.5" cy="14.5" r="1.5"/></g></svg>
<svg style="left:1846px;top:721px" width="18" height="18" viewBox="0 0 18 18"><rect x="1.2" y="1.2" width="15.5" height="15.5" rx="2.2" fill="none" stroke="#6c707e" stroke-width="1.5"/><path d="M7 1.5V16.5M7 9H16.5" stroke="#6c707e" stroke-width="1.5"/></svg>
<div class="a" style="left:51.0px;top:752.0px;width:1818.0px;height:231.0px;background:#fff;"></div>
<div class="a" style="left:51.0px;top:752.0px;width:1818.0px;height:1.0px;background:#dcdcdc;"></div>
<div class="a" style="left:411.0px;top:752.0px;width:1.3px;height:231.0px;background:#d4d4d4;"></div>
<svg style="left:63px;top:762px" width="19" height="16" viewBox="0 0 19 16"><path d="M1.5 8.5L6.5 13.5L17.5 1.5" fill="none" stroke="#f0894a" stroke-width="2.6"/></svg>
<div class="t" style="left:86.0px;top:758.6px;font-size:16.67px">"main"@1 in g...ain": RUNNING</div>
<svg style="left:346px;top:762px" width="18" height="17" viewBox="0 0 18 17"><path d="M1 1.2H16.8L10.8 8.5V15.8L7 13.2V8.5Z" fill="none" stroke="#6c707e" stroke-width="1.5" stroke-linejoin="round"/></svg>
<svg style="left:388.5px;top:767px" width="11" height="7" viewBox="0 0 11 7"><path d="M0.8 0.8L5.5 5.5L10.2 0.8" fill="none" stroke="#6c707e" stroke-width="1.4"/></svg>
<div class="t m" style="left:421.5px;top:758.5px;font-size:16.65px;line-height:24px;color:#8c8c8c">Evaluate expression (Enter) or add a watch (Ctrl+Shift+Enter)</div>
<svg style="left:1806px;top:762px" width="19" height="19" viewBox="0 0 19 19"><path d="M7.5 1V13M1.5 7H13.5" stroke="#9a9da6" stroke-width="1.5"/><circle cx="11" cy="15.5" r="2" fill="none" stroke="#9a9da6" stroke-width="1.2"/><circle cx="16" cy="15.5" r="2" fill="none" stroke="#9a9da6" stroke-width="1.2"/></svg>
<svg style="left:1845px;top:767px" width="12" height="7" viewBox="0 0 12 7"><path d="M0.8 0.8L6 5.5L11.2 0.8" fill="none" stroke="#6c707e" stroke-width="1.4"/></svg>
<div class="a" style="left:412.0px;top:786.5px;width:1457.0px;height:2.0px;background:#dcdcdc;"></div>
<div class="a" style="left:51.0px;top:787.5px;width:360.0px;height:27.5px;background:#d5d5d5;"></div>
<div class="a" style="left:51.0px;top:815.0px;width:360.0px;height:25.8px;background:#fdfbe6;"></div>
<svg style="left:63px;top:794px" width="16" height="15" viewBox="0 0 16 15"><path d="M5 1L1.5 4.8L5 8.5" fill="none" stroke="#6c707e" stroke-width="1.5"/><path d="M1.8 4.8H9.5A5 5 0 0 1 9.5 14H5.5" fill="none" stroke="#6c707e" stroke-width="1.5"/></svg>
<div class="a" style="left:51px;top:780px;width:360px;height:100px;overflow:hidden">
<div class="t" style="left:34px;top:9.75px">&lt;init&gt;:168, AbstractInputCheckedMapDecorator$EntrySetIterator</div>
<div class="t" style="left:34px;top:35.5px;color:#a3a3a3">iterator:122, AbstractInputCheckedMapDecorator$EntrySet</div>
</div>
<div class="t" style="left:85.0px;top:841.4px;">main:19, Demo2 <span style="font-style:italic;color:#8c8c8c">(com.miaoji)</span></div>
<div class="a" style="left:51.0px;top:942.0px;width:151.0px;height:12.0px;background:#dedede;border:1px solid #f4f4f4"></div>
<div class="a" style="left:51.0px;top:955.0px;width:360.0px;height:27.0px;background:#f2f2f2;"></div>
<div class="t" style="left:61.2px;top:956.0px;font-size:14.6px;color:#8a8a8a;top:957.5px;line-height:22px;height:22px">Switch frames from anywhere in the IDE with Ctrl..</div>
<svg style="left:391px;top:964px" width="10" height="10" viewBox="0 0 10 10"><path d="M0.8 0.8L9.2 9.2M9.2 0.8L0.8 9.2" stroke="#9a9da6" stroke-width="1.3"/></svg>
<svg style="left:423.0px;top:796.0px" width="7" height="11" viewBox="0 0 7 11"><path d="M0.8 0.8L5.5 5.5L0.8 10.2" fill="none" stroke="#6c707e" stroke-width="1.5"/></svg>
<svg style="left:446px;top:792px" width="14" height="18" viewBox="0 0 14 18"><g fill="#fdf3df" stroke="#d49c2b" stroke-width="1.5"><rect x="1" y="1" width="12" height="4.3" rx="1.2"/><rect x="1" y="6.6" width="12" height="4.3" rx="1.2"/><rect x="1" y="12.2" width="12" height="4.3" rx="1.2"/></g></svg>
<div class="t" style="left:466.9px;top:789.5px;"><span style="color:#8e1b1b">this</span> = <span style="color:#7f8691">{AbstractInputCheckedMapDecorator$EntrySetIterator@549}</span></div>
<svg style="left:423.0px;top:821.0px" width="7" height="11" viewBox="0 0 7 11"><path d="M0.8 0.8L5.5 5.5L0.8 10.2" fill="none" stroke="#6c707e" stroke-width="1.5"/></svg>
<svg style="left:444px;top:817.0px" width="18" height="18" viewBox="0 0 18 18"><circle cx="9" cy="9" r="7.9" fill="#fff5ec" stroke="#e8762d" stroke-width="1.5"/><path d="M6.6 6V14.8M6.6 8.8A2.5 2.5 0 1 1 6.6 9.2" fill="none" stroke="#e8762d" stroke-width="1.4"/><circle cx="9" cy="9" r="2.5" fill="none" stroke="#e8762d" stroke-width="1.4"/></svg>
<div class="t" style="left:466.9px;top:814.5px;"><span style="color:#8e1b1b">iterator</span> = <span style="color:#7f8691">{HashMap$EntryIterator@550}</span></div>
<svg style="left:423.0px;top:846.0px" width="7" height="11" viewBox="0 0 7 11"><path d="M0.8 0.8L5.5 5.5L0.8 10.2" fill="none" stroke="#6c707e" stroke-width="1.5"/></svg>
<svg style="left:444px;top:842.0px" width="18" height="18" viewBox="0 0 18 18"><circle cx="9" cy="9" r="7.9" fill="#fff5ec" stroke="#e8762d" stroke-width="1.5"/><path d="M6.6 6V14.8M6.6 8.8A2.5 2.5 0 1 1 6.6 9.2" fill="none" stroke="#e8762d" stroke-width="1.4"/><circle cx="9" cy="9" r="2.5" fill="none" stroke="#e8762d" stroke-width="1.4"/></svg>
<div class="t" style="left:466.9px;top:839.5px;"><span style="color:#8e1b1b">parent</span> = <span style="color:#7f8691">{TransformedMap@517}</span>&nbsp; size = 1</div>
<svg style="left:442px;top:871px" width="22" height="11" viewBox="0 0 22 11"><g fill="none" stroke="#9aa7b0" stroke-width="1.8"><circle cx="5" cy="5.5" r="3.8"/><circle cx="16" cy="5.5" r="3.8"/><path d="M8.8 4.5Q10.5 3 12.2 4.5"/></g></svg>
<div class="t" style="left:466.9px;top:864.5px;"><span style="color:#8e1b1b">this.parent</span> = null</div>
<div class="a" style="left:0.0px;top:982.0px;width:1920.0px;height:1.0px;background:#d4d4d4;"></div>
<div class="a" style="left:19.0px;top:996.5px;width:8.5px;height:9.0px;background:transparent;border:1.4px solid #4a7ff0;border-radius:2px;background:#e7effd"></div>
<div class="t" style="left:33.5px;top:987.8px;">commons-collections-3.2.1.jar</div>
<div class="t" style="left:296.0px;top:987.8px;">org</div>
<div class="t" style="left:352.9px;top:987.8px;">apache</div>
<div class="t" style="left:439.3px;top:987.8px;">commons</div>
<div class="t" style="left:545.0px;top:987.8px;">collections</div>
<div class="t" style="left:659.9px;top:987.8px;">map</div>
<svg style="left:277.5px;top:994.5px" width="7" height="11" viewBox="0 0 7 11"><path d="M0.8 0.8L5.5 5.5L0.8 10.2" fill="none" stroke="#9a9da6" stroke-width="1.5"/></svg>
<svg style="left:336.5px;top:994.5px" width="7" height="11" viewBox="0 0 7 11"><path d="M0.8 0.8L5.5 5.5L0.8 10.2" fill="none" stroke="#9a9da6" stroke-width="1.5"/></svg>
<svg style="left:422.5px;top:994.5px" width="7" height="11" viewBox="0 0 7 11"><path d="M0.8 0.8L5.5 5.5L0.8 10.2" fill="none" stroke="#9a9da6" stroke-width="1.5"/></svg>
<svg style="left:528.2px;top:994.5px" width="7" height="11" viewBox="0 0 7 11"><path d="M0.8 0.8L5.5 5.5L0.8 10.2" fill="none" stroke="#9a9da6" stroke-width="1.5"/></svg>
<svg style="left:643.2px;top:994.5px" width="7" height="11" viewBox="0 0 7 11"><path d="M0.8 0.8L5.5 5.5L0.8 10.2" fill="none" stroke="#9a9da6" stroke-width="1.5"/></svg>
<svg style="left:705.2px;top:994.5px" width="7" height="11" viewBox="0 0 7 11"><path d="M0.8 0.8L5.5 5.5L0.8 10.2" fill="none" stroke="#9a9da6" stroke-width="1.5"/></svg>
<svg style="left:1044.2px;top:994.5px" width="7" height="11" viewBox="0 0 7 11"><path d="M0.8 0.8L5.5 5.5L0.8 10.2" fill="none" stroke="#9a9da6" stroke-width="1.5"/></svg>
<svg style="left:1221.0px;top:994.5px" width="7" height="11" viewBox="0 0 7 11"><path d="M0.8 0.8L5.5 5.5L0.8 10.2" fill="none" stroke="#9a9da6" stroke-width="1.5"/></svg>
<svg style="left:723.9px;top:990.2px" width="20" height="20" viewBox="0 0 20 20"><circle cx="10" cy="10" r="8.1" fill="#e7effd" stroke="#3d74f0" stroke-width="1.6" stroke-dasharray="10.72 2" stroke-dashoffset="11.72"/><path d="M13.1 7.1A4.2 4.2 0 1 0 13.1 12.9" fill="none" stroke="#3d74f0" stroke-width="1.6"/></svg>
<div class="t" style="left:749.2px;top:987.8px;">AbstractInputCheckedMapDecorator</div>
<svg style="left:1062.6px;top:990.2px" width="20" height="20" viewBox="0 0 20 20"><circle cx="10" cy="10" r="8.1" fill="#e7effd" stroke="#3d74f0" stroke-width="1.6"/><path d="M13.1 7.1A4.2 4.2 0 1 0 13.1 12.9" fill="none" stroke="#3d74f0" stroke-width="1.6"/></svg>
<div class="t" style="left:1088.3px;top:987.8px;">EntrySetIterator</div>
<svg style="left:1239.8px;top:990.2px" width="20" height="20" viewBox="0 0 20 20"><circle cx="10" cy="10" r="8.1" fill="#fdf0f0" stroke="#db3b4b" stroke-width="1.6"/><path d="M6 13.6V6.9M6 8.6C6.2 7.3 7 6.8 7.8 6.8S9.9 7.3 9.9 8.6V13.6M9.9 8.6C10 7.3 10.8 6.8 11.7 6.8S13.8 7.3 13.8 8.6V13.6" fill="none" stroke="#db3b4b" stroke-width="1.35"/></svg>
<div class="t" style="left:1265.0px;top:987.8px;">EntrySetIterator</div>
<div class="t" style="left:1645.5px;top:987.8px;">52:1</div>
<div class="t" style="left:1698.5px;top:987.8px;color:#8c8c8c">CRLF</div>
<div class="t" style="left:1759.5px;top:987.8px;color:#8c8c8c">UTF-8</div>
<div class="t" style="left:1828.3px;top:987.8px;">4 spaces</div>
<div class="a" style="left:0.0px;top:1019.5px;width:1920.0px;height:1.5px;background:#ccd5c8;"></div><!--/DEBUG-->
<!--CONTENT-->
</body></html>
